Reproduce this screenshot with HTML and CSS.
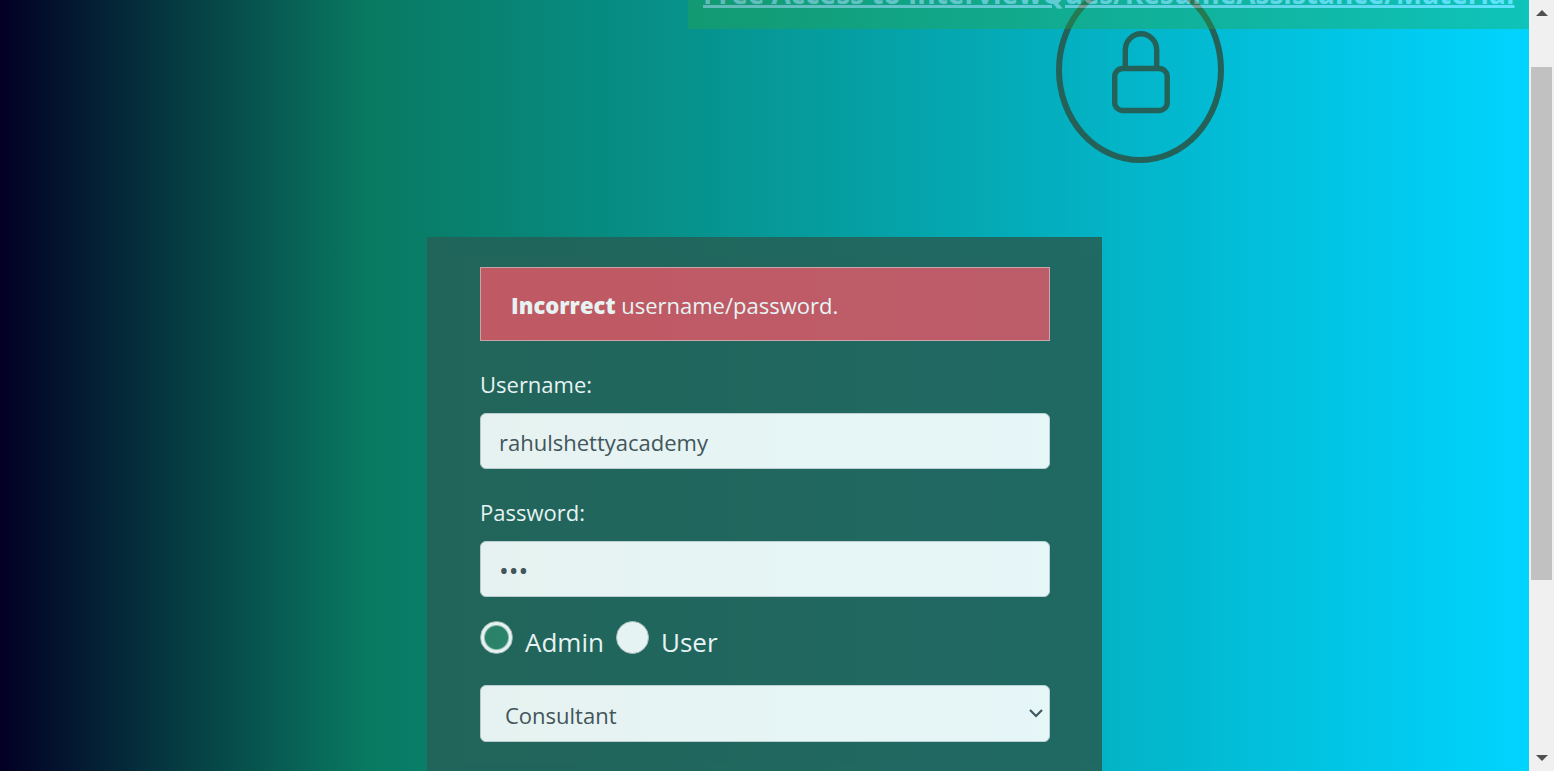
FILE: index.html
```html
<!DOCTYPE html>
<html lang="en">
<head>
<meta charset="utf-8">
<title>Login</title>
<link rel="stylesheet" href="styles.css">
</head>
<body>
<div class="window">
  <main class="page">
    <div class="promo"><a class="promo-link" href="#">Free Access to InterviewQues/ResumeAssistance/Material</a></div>
    <div class="hero">
      <svg class="lock" width="168" height="186" viewBox="0 0 168 186" fill="none" stroke="#246259" aria-hidden="true">
        <ellipse cx="84" cy="93" rx="81" ry="90" stroke-width="6"/>
        <rect x="58.700" y="91.500" width="52.500" height="42" rx="8" stroke-width="5.400"/>
        <path d="M69.300 91V73a15.700 16.200 0 0 1 31.400 0V91" stroke-width="5.400"/>
      </svg>
    </div>
    <form class="card">
      <div class="alert" role="alert"><strong>Incorrect</strong> username/password.</div>
      <div class="field">
        <label for="username">Username:</label>
        <input class="control" id="username" type="text" value="rahulshettyacademy">
      </div>
      <div class="field">
        <label for="password">Password:</label>
        <input class="control password" id="password" type="password" value="abc">
      </div>
      <div class="roles">
        <label class="role"><input type="radio" name="role" checked><span>Admin</span></label>
        <label class="role"><input type="radio" name="role"><span>User</span></label>
      </div>
      <div class="select-wrap">
        <select class="control select" aria-label="Role"><option>Consultant</option><option>Student</option><option>Teacher</option></select>
        <svg class="chevron" width="14" height="9" viewBox="0 0 14 9" fill="none" stroke="#495057" stroke-width="2.200" aria-hidden="true"><path d="M1 1l6 6 6-6"/></svg>
      </div>
    </form>
  </main>
  <div class="scrollbar" aria-hidden="true">
    <svg width="12" height="6" viewBox="0 0 12 6" fill="#505050"><path d="M6 0l6 6H0z"/></svg>
    <div class="track"><div class="thumb"></div></div>
    <svg width="12" height="6" viewBox="0 0 12 6" fill="#505050"><path d="M6 6L0 0h12z"/></svg>
  </div>
</div>
</body>
</html>
```
FILE: styles.css
```css
* { box-sizing: border-box; }
body {
  margin: 0;
  font-family: "Segoe UI", "Open Sans", "Noto Sans", sans-serif;
  font-size: 22px;
  line-height: 34px;
}
.window { display: flex; height: 100vh; overflow: hidden; }
.page {
  position: relative;
  flex: 1;
  overflow: hidden;
  background: linear-gradient(90deg, #020024 0%, #097961 24%, #00d4ff 100%);
}
.promo {
  position: absolute;
  z-index: 1;
  top: -31px;
  right: 0;
  width: 55%;
  padding: 7px 15px 19px;
  background: #28a745;
  font-size: 28px;
  font-weight: 700;
  white-space: nowrap;
  opacity: 0.37;
}
.promo-link {
  color: #fff;
  text-decoration-thickness: 3px;
  text-underline-offset: 1px;
}
.hero {
  display: flex;
  justify-content: flex-end;
  margin-top: -23px;
  padding-right: calc(20% - 1px);
}
.lock { display: block; }
.card {
  width: 675px;
  max-width: 100%;
  min-height: 600px;
  margin: 74px auto 0;
  padding: 30px 52px 0 53px;
  background: #246259;
  color: #fff;
  opacity: 0.9;
}
.alert {
  margin-bottom: 26px;
  padding: 20px 30px 18px;
  border: 1px solid #e2a5aa;
  background: #d35562;
}
.alert strong { font-weight: 800; }
.field { margin-bottom: 26px; }
.field label { display: block; margin-bottom: 12px; }
.control {
  display: block;
  width: 100%;
  height: 56px;
  padding: 8px 18px 6px;
  border: 1px solid #ced4da;
  border-radius: 6px;
  background: #fff;
  color: #495057;
  font: inherit;
}
.password { font-size: 26px; }
.roles { display: flex; gap: 12px; margin: -2px 0 26px; }
.role { display: flex; gap: 12px; font-size: 26px; line-height: 34px; }
.role input {
  appearance: none;
  width: 33px;
  height: 33px;
  margin: 0;
  border: 1px solid #b9c5c4;
  border-radius: 50%;
  background: #fff;
}
.role input:checked { background: radial-gradient(circle, #2e8468 11px, #fff 13px); }
.role span { padding-top: 4px; }
.select-wrap { position: relative; }
.select { appearance: none; height: 57px; padding-left: 24px; }
.chevron { position: absolute; top: 24px; right: 7px; }
.scrollbar {
  display: flex;
  flex-direction: column;
  align-items: center;
  width: 25px;
  padding: 10px 2px;
  background: #f0f0f0;
}
.track { flex: 1; align-self: stretch; padding-top: 51px; }
.thumb { height: calc(75% - 3px); background: #c1c1c1; }
```
